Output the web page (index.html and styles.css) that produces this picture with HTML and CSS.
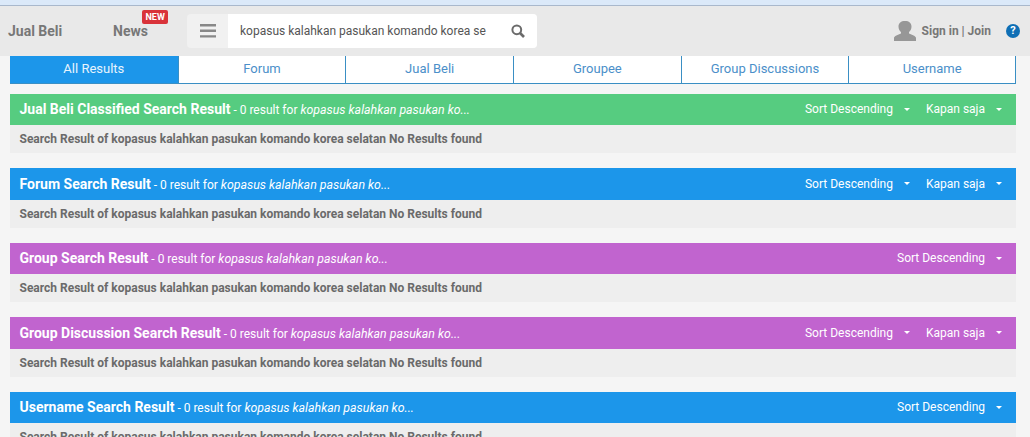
FILE: index.html
```html
<!DOCTYPE html>
<html lang="en">
<head>
  <meta charset="UTF-8">
  <title>Search Result</title>
  <link rel="stylesheet" href="styles.css">
</head>
<body>
  <div class="browser-edge"></div>
  <header class="topbar">
    <a class="nav-link nav-jual">Jual Beli</a>
    <a class="nav-link nav-news">News<span class="badge">NEW</span></a>
    <div class="search">
      <div class="burger">
        <svg width="16" height="14" viewBox="0 0 16 14"><path d="M0 0h16v2.4H0zM0 5.6h16V8H0zM0 11.2h16v2.4H0z" fill="#888"/></svg>
      </div>
      <div class="search-field">
        <span class="search-text">kopasus kalahkan pasukan komando korea se</span>
        <svg width="14" height="14" viewBox="0 0 14 14" fill="none" stroke="#6b6b6b"><circle cx="5.8" cy="5.8" r="4.4" stroke-width="2"/><path d="M9 9l4 4" stroke-width="2.6"/></svg>
      </div>
    </div>
    <div class="user">
      <svg width="22" height="20" viewBox="0 0 22 20"><path d="M0 20v-3c0-2 4-3 7-4.500v-1.500c-1.500-1-2.500-3-2.500-5.500C4.500 2 7 0 11 0s6.500 2 6.500 5.500c0 2.500-1 4.500-2.500 5.500v1.500c3 1.500 7 2.500 7 4.500v3z" fill="#979797"/></svg>
      <span class="sign">Sign in | Join</span>
    </div>
    <div class="help">?</div>
  </header>

  <main class="content">
    <nav class="tabs">
      <a class="tab active">All Results</a>
      <a class="tab">Forum</a>
      <a class="tab">Jual Beli</a>
      <a class="tab">Groupee</a>
      <a class="tab">Group Discussions</a>
      <a class="tab">Username</a>
    </nav>

    <section class="result">
      <div class="result-head green">
        <div class="result-title"><b>Jual Beli Classified Search Result</b> - 0 result for <i>kopasus kalahkan pasukan ko...</i></div>
        <div class="sorts"><span class="sort">Sort Descending<s class="caret"></s></span><span class="sort">Kapan saja<s class="caret"></s></span></div>
      </div>
      <div class="result-body">Search Result of kopasus kalahkan pasukan komando korea selatan No Results found</div>
    </section>

    <section class="result">
      <div class="result-head blue">
        <div class="result-title"><b>Forum Search Result</b> - 0 result for <i>kopasus kalahkan pasukan ko...</i></div>
        <div class="sorts"><span class="sort">Sort Descending<s class="caret"></s></span><span class="sort">Kapan saja<s class="caret"></s></span></div>
      </div>
      <div class="result-body">Search Result of kopasus kalahkan pasukan komando korea selatan No Results found</div>
    </section>

    <section class="result">
      <div class="result-head purple">
        <div class="result-title"><b>Group Search Result</b> - 0 result for <i>kopasus kalahkan pasukan ko...</i></div>
        <div class="sorts"><span class="sort">Sort Descending<s class="caret"></s></span></div>
      </div>
      <div class="result-body">Search Result of kopasus kalahkan pasukan komando korea selatan No Results found</div>
    </section>

    <section class="result">
      <div class="result-head purple">
        <div class="result-title"><b>Group Discussion Search Result</b> - 0 result for <i>kopasus kalahkan pasukan ko...</i></div>
        <div class="sorts"><span class="sort">Sort Descending<s class="caret"></s></span><span class="sort">Kapan saja<s class="caret"></s></span></div>
      </div>
      <div class="result-body">Search Result of kopasus kalahkan pasukan komando korea selatan No Results found</div>
    </section>

    <section class="result">
      <div class="result-head blue">
        <div class="result-title"><b>Username Search Result</b> - 0 result for <i>kopasus kalahkan pasukan ko...</i></div>
        <div class="sorts"><span class="sort">Sort Descending<s class="caret"></s></span></div>
      </div>
      <div class="result-body">Search Result of kopasus kalahkan pasukan komando korea selatan No Results found</div>
    </section>
  </main>
</body>
</html>
```
FILE: styles.css
```css
* {
  margin: 0;
  padding: 0;
  box-sizing: border-box;
}
html, body {
  height: 437px;
  overflow: hidden;
}
body {
  background: #f5f5f5;
  font-family: Roboto, "Liberation Sans", sans-serif;
  font-size: 13px;
  color: #666;
}
.browser-edge {
  height: 6px;
  background: #dbe9f9;
  border-bottom: 1px solid #a9b8cc;
}
.topbar {
  height: 50px;
  background: #e9e9e9;
  display: flex;
  align-items: center;
}
.nav-link {
  font-size: 14px;
  font-weight: 700;
  color: #777;
  position: relative;
}
.nav-jual {
  margin-left: 8px;
  width: 105px;
}
.nav-news {
  width: 74px;
}
.badge {
  position: absolute;
  left: 29px;
  top: -13px;
  background: #d9333a;
  color: #fff;
  font-size: 9px;
  line-height: 14px;
  padding: 0 3.500px;
  border-radius: 2px;
}
.search {
  display: flex;
  width: 350px;
  height: 34px;
  background: #f1f1f1;
  border-radius: 4px;
  margin-top: -1px;
}
.burger {
  width: 41px;
  display: flex;
  align-items: center;
  justify-content: center;
}
.search-field {
  flex: 1;
  background: #fff;
  border-radius: 0 4px 4px 0;
  display: flex;
  align-items: center;
  justify-content: space-between;
  padding: 0 12px;
}
.search-text {
  font-size: 12px;
  color: #555;
  white-space: nowrap;
}
.user {
  margin-left: auto;
  display: flex;
  align-items: center;
  gap: 6px;
}
.sign {
  font-size: 12px;
  font-weight: 700;
  color: #777;
}
.help {
  width: 14px;
  height: 14px;
  border-radius: 50%;
  background: #0f6fb5;
  color: #fff;
  font-size: 11px;
  font-weight: 700;
  line-height: 14px;
  text-align: center;
  margin: 0 10px 0 15px;
}
.content {
  padding: 0 14px 0 10px;
}
.tabs {
  display: grid;
  grid-template-columns: repeat(6, 1fr);
  height: 28px;
  background: #fff;
  border-bottom: 1px solid #3a8fc4;
}
.tab {
  font-size: 13px;
  line-height: 26px;
  text-align: center;
  color: #4b8fc9;
  border-left: 1px solid #3a8fc4;
}
.tab:last-child {
  border-right: 1px solid #3a8fc4;
}
.tab.active {
  background: #1c96ea;
  color: #e8f4fd;
  border-left: 0;
}
.result {
  margin-bottom: 15px;
}
.content .result:first-of-type {
  margin-top: 9.600px;
}
.result-head {
  height: 31.500px;
  display: flex;
  align-items: center;
  justify-content: space-between;
  color: #fff;
  padding: 0 14px 0 9.500px;
  font-size: 12px;
}
.result-head b {
  font-size: 14px;
}
.result-head i {
  font-size: 12.350px;
}
.green { background: #56cc80; }
.blue { background: #1c96ea; }
.purple { background: #c164cf; }
.sorts {
  display: flex;
  gap: 16px;
  font-size: 12px;
}
.sort {
  display: flex;
  align-items: center;
  text-decoration: none;
}
.caret {
  width: 0;
  height: 0;
  margin-left: 11px;
  border: 3px solid transparent;
  border-top-color: #fff;
  border-bottom: 0;
}
.result-body {
  height: 28px;
  background: #eee;
  padding: 0 9.500px;
  line-height: 28px;
  font-size: 12px;
  font-weight: 700;
  color: #6a6a6a;
}
```
